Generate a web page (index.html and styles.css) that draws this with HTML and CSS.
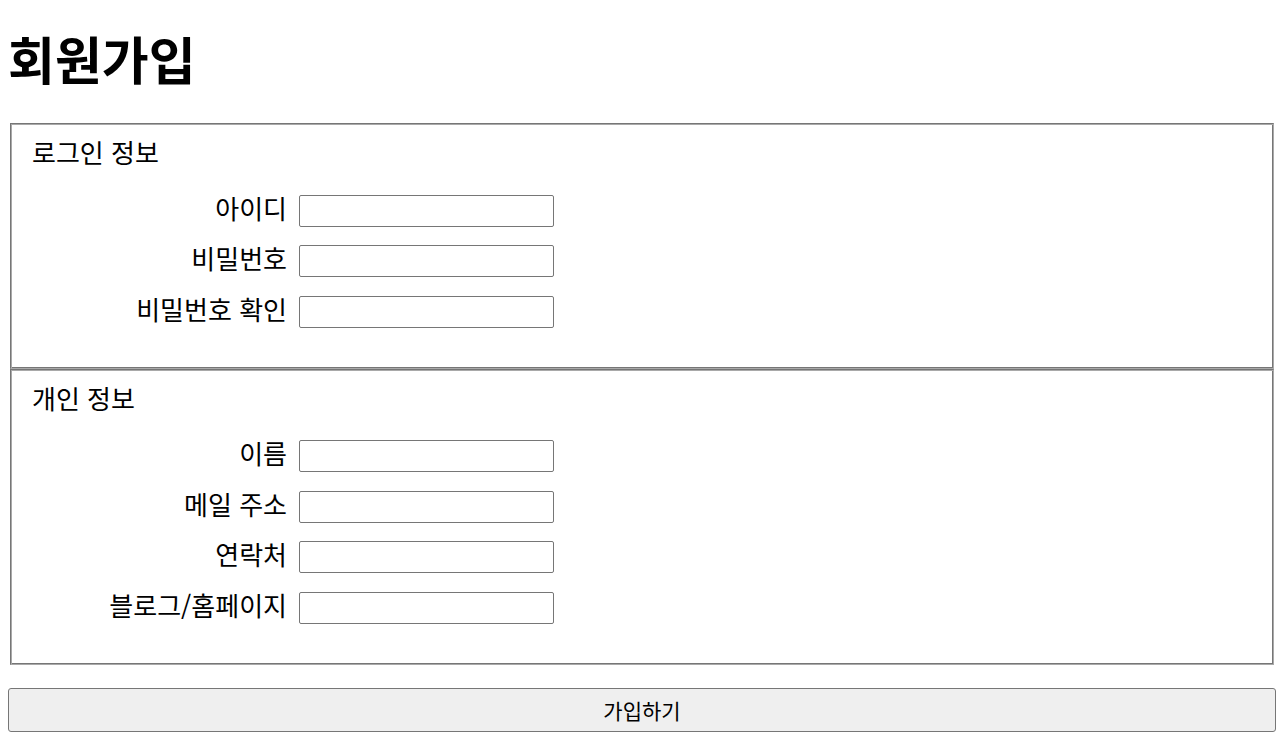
FILE: index.html
```html
<!DOCTYPE html>
<html lang="ko">
<head>
    <meta charset="UTF-8">
    <meta name="viewport" content="width=device-width, initial-scale=1.0">
    <title>회원가입</title>
    <link rel="stylesheet" href="styles.css">
</head>
<body>
    <h1>회원가입</h1>
    <form class="signup">
        <fieldset class="group">
            <p class="group-title">로그인 정보</p>
            <div class="rows">
                <label for="userId">아이디</label>
                <input type="text" id="userId">
                <label for="userPw">비밀번호</label>
                <input type="password" id="userPw">
                <label for="userPw2">비밀번호 확인</label>
                <input type="password" id="userPw2">
            </div>
        </fieldset>
        <fieldset class="group">
            <p class="group-title">개인 정보</p>
            <div class="rows">
                <label for="userName">이름</label>
                <input type="text" id="userName">
                <label for="userMail">메일 주소</label>
                <input type="email" id="userMail">
                <label for="userTel">연락처</label>
                <input type="tel" id="userTel">
                <label for="userBlog">블로그/홈페이지</label>
                <input type="url" id="userBlog">
            </div>
        </fieldset>
        <button type="submit" class="submit">가입하기</button>
    </form>
</body>
</html>
```

FILE: styles.css
```css
body {
    font-family: "Noto Sans CJK KR", sans-serif;
    font-size: 26px;
    color: #000;
    background: #fff;
    margin: 0;
    padding: 0 8px;
}
h1 {
    font-size: 51px;
    line-height: 52px;
    margin: 32px 0 39px;
}
.signup {
    margin: 0;
}
/* groove border drawn by hand: dark outside top/left, dark inside bottom/right */
.group {
    margin: 0 2px;
    padding: 9px 19px 16px 21px;
    border: 1px solid;
    border-color: #767676 #a9a9a9 #a9a9a9 #767676;
    box-shadow: inset 1px 1px 0 #a9a9a9, inset -1px -1px 0 #767676;
}
.group-title {
    margin: 0;
    line-height: 38px;
}
.rows {
    display: grid;
    grid-template-columns: 255px 255px;
    grid-auto-rows: 32px;
    column-gap: 12px;
    row-gap: 18.5px;
    margin: 23.5px 0 24px;
}
.rows label {
    text-align: right;
    line-height: 26px;
}
.rows input {
    box-sizing: border-box;
    width: 255px;
    height: 32px;
    border: 1px solid #767676;
    border-radius: 2px;
    padding: 1px 2px;
    margin: 0;
}
.submit {
    display: block;
    box-sizing: border-box;
    width: 100%;
    height: 44px;
    margin-top: 23.5px;
    font-family: "Noto Sans CJK KR", sans-serif;
    font-size: 21px;
    background-color: #efefef;
    border: 1px solid #767676;
    border-radius: 3px;
    color: #000;
}
```
